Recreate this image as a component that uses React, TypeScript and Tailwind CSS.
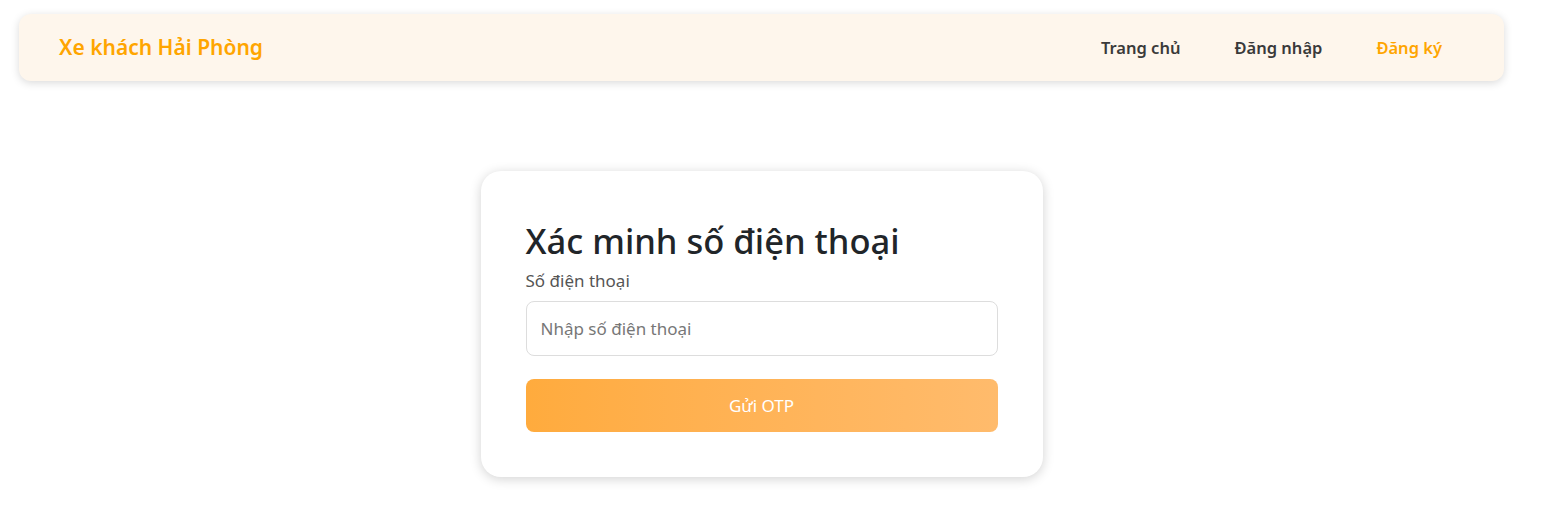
import React from "react";

export default function App() {
  return (
    <div className="min-h-[517px] bg-white" style={{ fontFamily: '"Noto Sans", "Open Sans", sans-serif' }}>
      <div className="w-[1485px] ml-[19px] pt-[14px]">
        <nav className="h-[67px] rounded-[12px] bg-[#fef6ec] shadow-[0_2px_8px_rgba(0,0,0,0.15)] flex items-center justify-between pl-[40px] pr-[62px]">
          <span className="text-[21px] font-semibold text-[#ffa500]">Xe khách Hải Phòng</span>
          <div className="flex items-center gap-[54px] text-[16.5px] font-semibold pt-[1px]">
            <a className="text-[#3a3a3a]">Trang chủ</a>
            <a className="text-[#3a3a3a]">Đăng nhập</a>
            <a className="text-[#ffa500]">Đăng ký</a>
          </div>
        </nav>
        <div className="flex justify-center pt-[90px]">
          <div className="w-[562px] rounded-[20px] bg-white shadow-[0_2px_12px_rgba(0,0,0,0.18)] p-[45px] pt-[48px]">
            <h1 className="text-[34.5px] font-medium text-[#212529] leading-[44px]">Xác minh số điện thoại</h1>
            <label className="block mt-[6px] text-[17px] text-[#555] leading-[24px]">Số điện thoại</label>
            <input
              className="mt-[8px] w-full h-[55px] rounded-[8px] border border-[#ddd] px-[14px] text-[17px] outline-none placeholder:text-[#777]"
              placeholder="Nhập số điện thoại"
            />
            <button className="mt-[23px] w-full h-[53px] rounded-[8px] bg-gradient-to-r from-[#ffab3d] to-[#ffbb6c] text-white text-[17px]">
              Gửi OTP
            </button>
          </div>
        </div>
      </div>
    </div>
  );
}
